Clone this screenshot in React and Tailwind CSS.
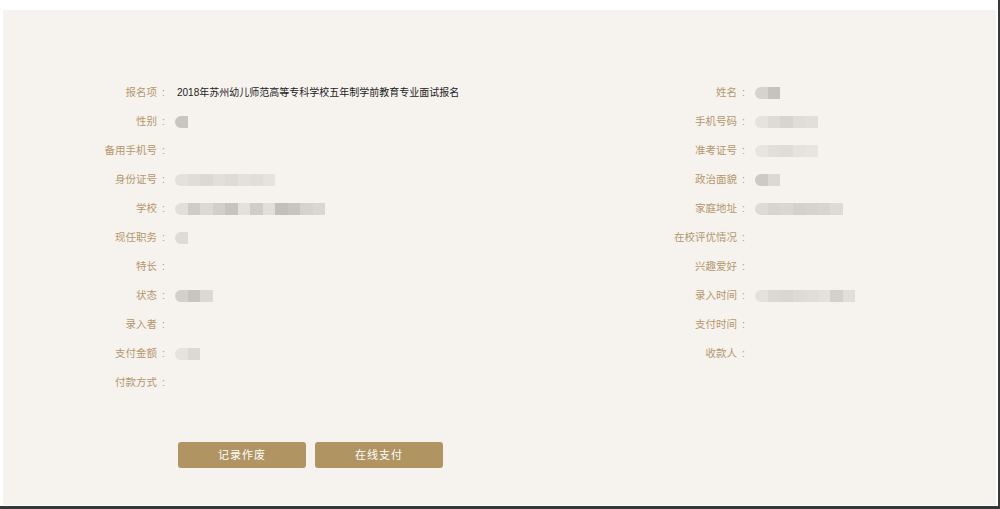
import React from 'react';

const font = { fontFamily: '"Liberation Sans", "Noto Sans CJK SC", sans-serif' };

// mosaic placeholder for masked values
const Mosaic = ({ shades }) => (
  <div className="flex h-[12px] overflow-hidden rounded-l-[6px] blur-[0.6px]">
    {shades.map((c, i) => (
      <div key={i} className="h-full w-[12.5px]" style={{ background: c }} />
    ))}
  </div>
);

const leftRows = [
  { label: '报名项', text: '2018年苏州幼儿师范高等专科学校五年制学前教育专业面试报名' },
  { label: '性别', shades: ['#c9c5c1'] },
  { label: '备用手机号' },
  { label: '身份证号', shades: ['#e4e0dc', '#e0dcd8', '#dcd8d4', '#e2dedb', '#dedad6', '#e4e0dc', '#e1ddd9', '#e6e2de'] },
  { label: '学校', shades: ['#e2dedb', '#cfcbc7', '#dcd8d4', '#d2cecb', '#c7c3bf', '#e4e0dc', '#d0ccc8', '#e2dedb', '#c3bfbb', '#c8c4c0', '#d6d2ce', '#dad6d2'] },
  { label: '现任职务', shades: ['#dedad6'] },
  { label: '特长' },
  { label: '状态', shades: ['#d3cfcb', '#c8c4c0', '#dcd8d4'] },
  { label: '录入者' },
  { label: '支付金额', shades: ['#e6e2de', '#dcd8d4'] },
  { label: '付款方式' },
];

const rightRows = [
  { label: '姓名', shades: ['#d6d2ce', '#c6c2be'] },
  { label: '手机号码', shades: ['#e6e2de', '#dedad6', '#d8d4d0', '#e0dcd8', '#e2dedb'] },
  { label: '准考证号', shades: ['#e8e4e0', '#e2dedb', '#e0dcd8', '#e6e2de', '#e8e4e0'] },
  { label: '政治面貌', shades: ['#cdc9c5', '#dcd8d4'] },
  { label: '家庭地址', shades: ['#dedad6', '#d8d4d0', '#dad6d2', '#d4d0cc', '#d6d2ce', '#d8d4d0', '#dedad6'] },
  { label: '在校评优情况' },
  { label: '兴趣爱好' },
  { label: '录入时间', shades: ['#e4e0dc', '#dcd8d4', '#dad6d2', '#dedad6', '#e0dcd8', '#e4e0dc', '#d4d0cc', '#e2dedb'] },
  { label: '支付时间' },
  { label: '收款人' },
];

const Row = ({ label, text, shades }) => (
  <div className="flex h-[29px] items-center">
    <div className="w-[80px] flex justify-end items-center text-[10.5px] text-[#b5976c] whitespace-nowrap">
      <span>{label}</span>
      <span className="ml-[5px] w-[4px]">:</span>
    </div>
    <div className="ml-[9px] flex items-center">
      {text && <span className="ml-[2px] text-[10px] text-[#222] whitespace-nowrap">{text}</span>}
      {shades && <Mosaic shades={shades} />}
    </div>
  </div>
);

const App = () => {
  return (
    <div className="w-[1000px] h-[509px] bg-white border-r-2 border-b-[3px] border-[#383838] overflow-hidden" style={font}>
      <div className="ml-[3px] mt-[10px] w-[993px] h-[495px] bg-[#f6f3ef] pt-[68px] pl-[83px]">
        <div className="flex">
          <div className="w-[580px]">
            {leftRows.map(r => <Row key={r.label} {...r} />)}
          </div>
          <div>
            {rightRows.map(r => <Row key={r.label} {...r} />)}
          </div>
        </div>
        <div className="flex gap-[9px] ml-[92px] mt-[45px]">
          <button className="w-[128px] h-[26px] rounded-[3px] bg-[#b09462] text-white text-[11px] tracking-[1px]">记录作废</button>
          <button className="w-[128px] h-[26px] rounded-[3px] bg-[#b09462] text-white text-[11px] tracking-[1px]">在线支付</button>
        </div>
      </div>
    </div>
  );
};

export default App;
